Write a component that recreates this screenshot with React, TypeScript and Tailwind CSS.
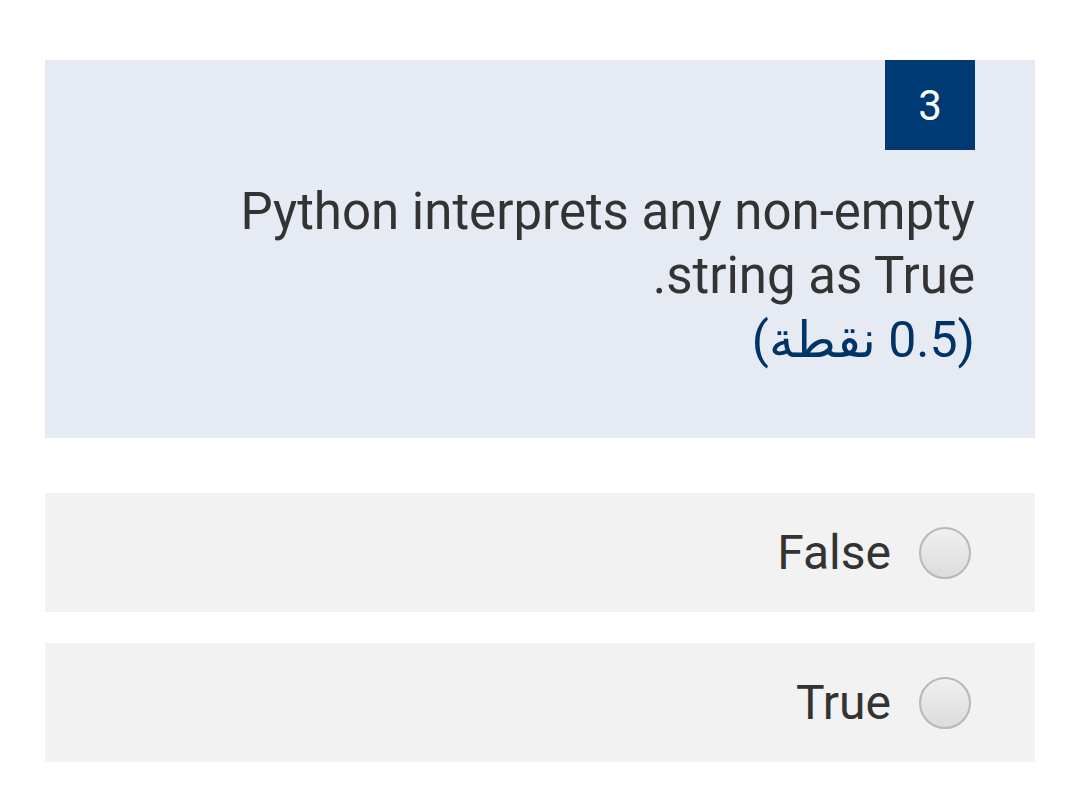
export default function App() {
  const options = ['False', 'True']

  return (
    <div
      dir="rtl"
      className="min-h-screen bg-white px-[45px] pt-[60px] text-[#333333]"
      style={{ fontFamily: 'Roboto, "Noto Sans", sans-serif' }}
    >
      {/* Question card */}
      <div className="bg-[#e6ebf3] pr-[60px] pl-[120px] pb-[66px]">
        <div className="flex h-[90px] w-[90px] items-center justify-center bg-[#003a75] text-[42px] text-white">
          3
        </div>
        <div className="mt-[30px] text-[51px] leading-[64px] text-[#333333]">
          Python interprets any non-empty string as True.
        </div>
        <div className="text-[50px] leading-[64px] text-[#003366]">(0.5 نقطة)</div>
      </div>

      {/* Options */}
      <div className="mt-[55px] flex flex-col gap-[31px]">
        {options.map((opt) => (
          <label
            key={opt}
            className="flex h-[119px] items-center gap-[28px] bg-[#f2f2f2] pr-[64px]"
          >
            <span className="h-[52px] w-[52px] rounded-full border-2 border-[#b8b8b8] bg-gradient-to-b from-[#f0f0f0] to-[#dcdcdc]" />
            <span className="text-[48px] leading-none text-[#333333]">{opt}</span>
          </label>
        ))}
      </div>
    </div>
  )
}
